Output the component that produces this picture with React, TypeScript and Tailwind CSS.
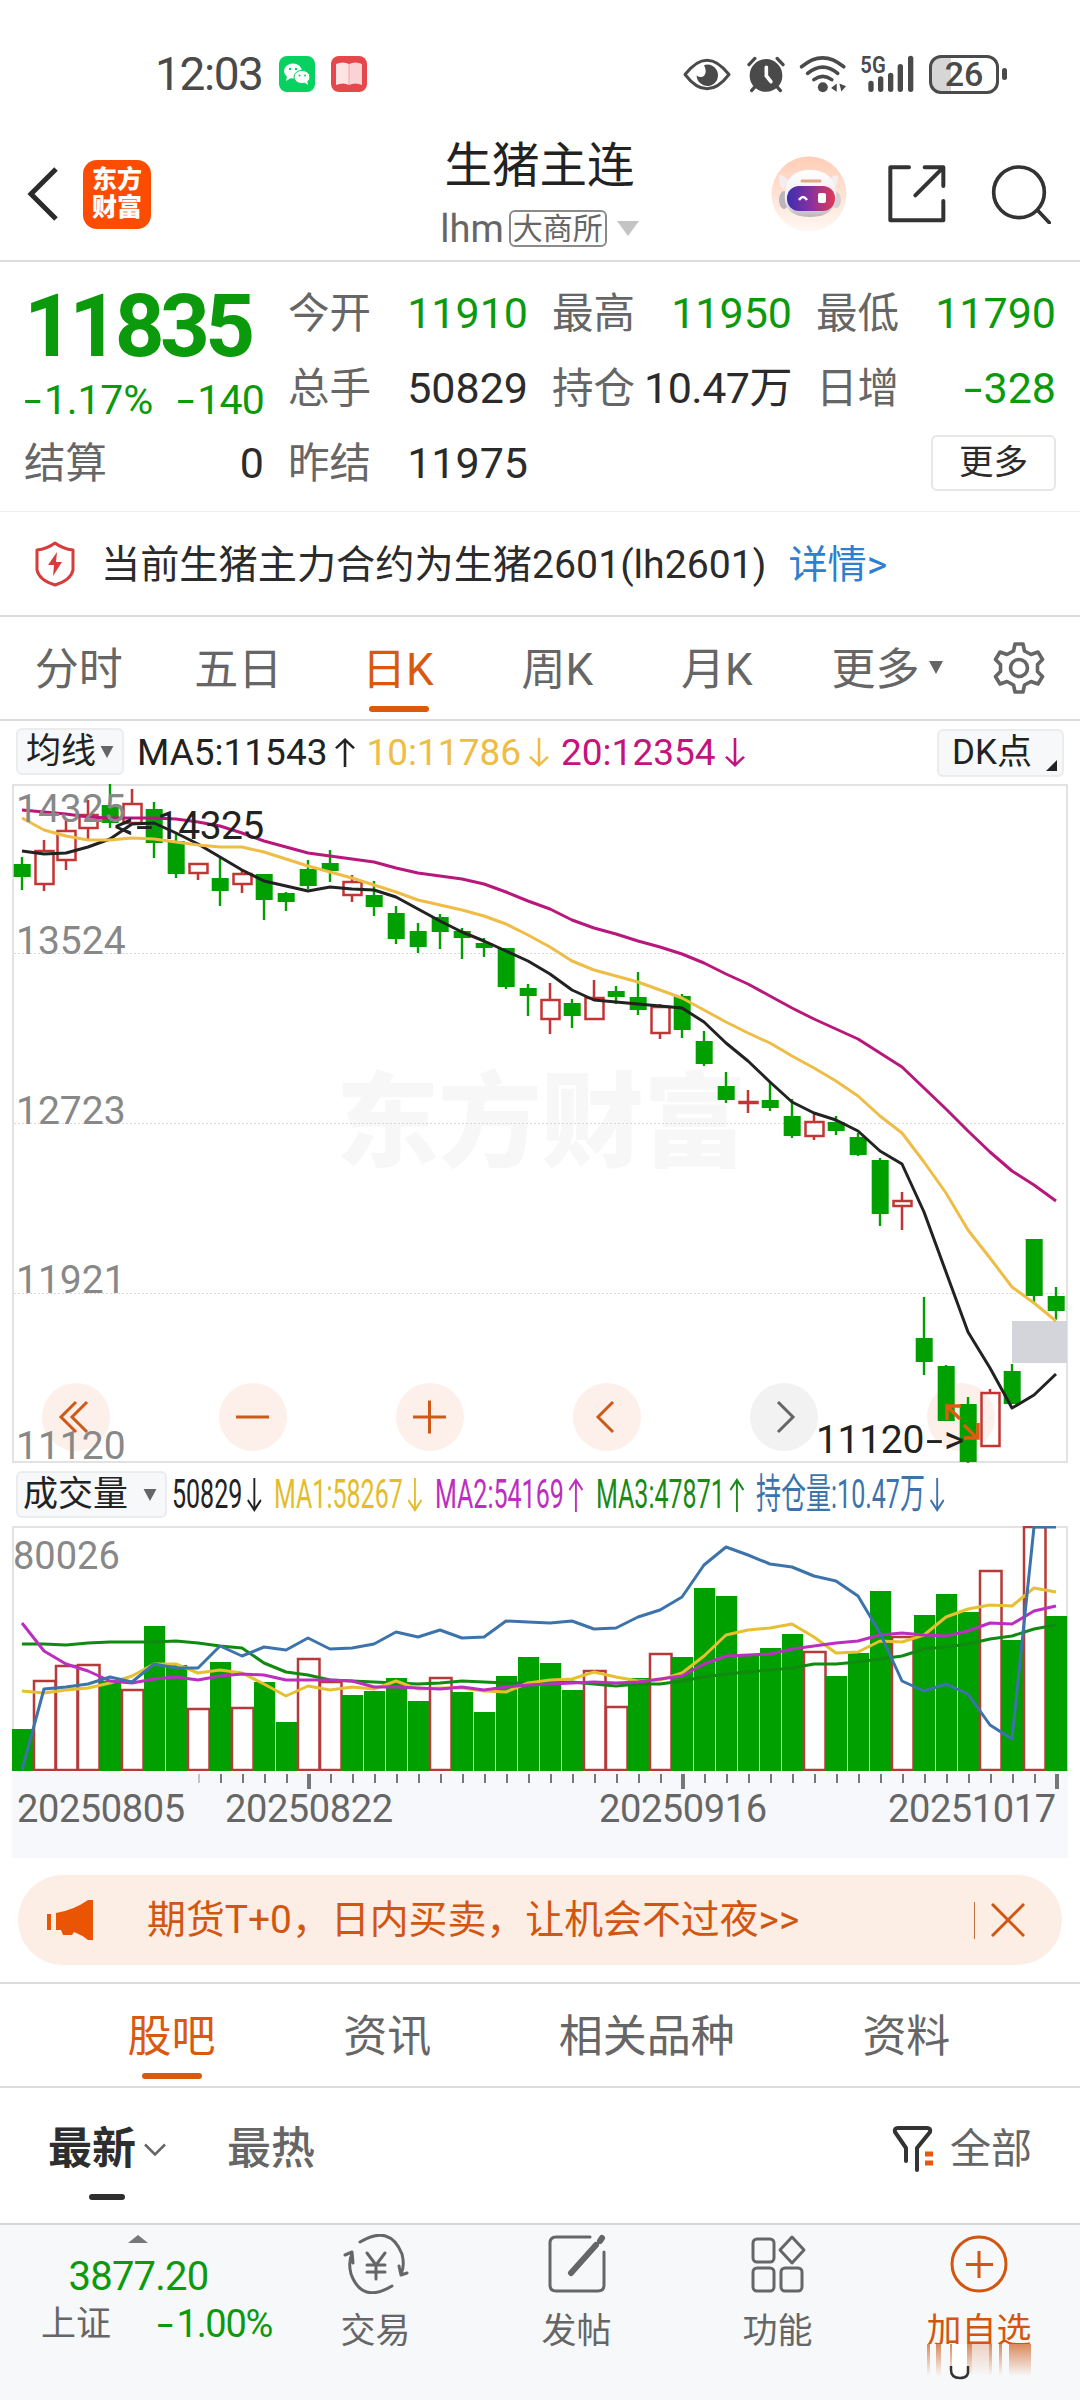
import type { ReactNode } from "react";

type Candle = [up: 0 | 1, high: number, top: number, bottom: number, low: number];

const STEP = 22;
const xAt = (i: number) => 10 + STEP * i;

const candles: Candle[] = [
  [0, 73, 80, 93, 106], [1, 56, 67, 100, 107], [1, 35, 47, 76, 86], [1, 16, 31, 44, 56],
  [0, 0, 21, 39, 44], [1, 5, 20, 39, 39], [0, 18, 25, 59, 74], [0, 50, 57, 90, 94],
  [1, 79, 80, 89, 96], [0, 74, 94, 107, 122], [1, 86, 90, 100, 109], [0, 90, 90, 116, 136],
  [0, 108, 109, 118, 127], [0, 76, 85, 102, 105], [0, 66, 79, 87, 98], [1, 91, 98, 111, 118],
  [0, 97, 111, 123, 132], [0, 122, 129, 155, 160], [0, 139, 147, 163, 169], [0, 130, 133, 148, 165],
  [0, 144, 147, 154, 175], [0, 154, 159, 164, 173], [0, 164, 164, 203, 205], [0, 200, 204, 212, 232],
  [1, 199, 216, 235, 250], [0, 215, 219, 232, 244], [1, 196, 214, 235, 235], [0, 202, 207, 213, 220],
  [0, 188, 213, 226, 231], [1, 220, 223, 249, 255], [0, 210, 212, 246, 254], [0, 247, 257, 280, 282],
  [0, 288, 302, 316, 319], [1, 306, 318, 319, 329], [0, 298, 316, 324, 327], [0, 315, 332, 352, 354],
  [1, 329, 338, 352, 356], [0, 332, 338, 347, 351], [0, 349, 353, 371, 372], [0, 374, 376, 430, 442],
  [1, 408, 417, 422, 446], [0, 513, 554, 578, 591], [0, 581, 582, 637, 637], [0, 613, 620, 678, 679],
  [1, 605, 609, 662, 662], [0, 580, 587, 620, 620], [0, 455, 455, 512, 518], [0, 503, 512, 527, 536],
];

const ma5 = [67, 70, 69, 63, 55, 40, 39, 49, 60, 73, 86, 97, 102, 107, 103, 105, 106, 113, 125, 137, 148, 157, 167, 177, 190, 206, 216, 218, 220, 222, 224, 238, 259, 277, 298, 318, 329, 336, 347, 367, 380, 428, 488, 548, 584, 624, 611, 590];
const ma10 = [34, 46, 52, 56, 56, 54, 55, 58, 61, 63, 63, 68, 75, 82, 88, 94, 101, 108, 116, 121, 126, 132, 140, 151, 163, 177, 186, 192, 198, 206, 214, 226, 238, 249, 259, 272, 284, 297, 312, 332, 349, 378, 409, 446, 474, 503, 519, 537];
const ma20 = [26, 28, 30, 33, 34, 34, 34, 35, 38, 42, 49, 57, 63, 69, 72, 75, 78, 84, 89, 92, 95, 100, 108, 117, 125, 136, 144, 150, 157, 163, 170, 179, 190, 200, 212, 224, 235, 245, 255, 269, 283, 304, 325, 347, 368, 387, 401, 417];

const volumes: [up: 0 | 1, top: number][] = [
  [0, 203], [1, 154], [1, 139], [1, 138], [0, 155], [1, 163], [0, 100], [0, 139], [1, 182], [0, 136],
  [1, 181], [0, 156], [0, 196], [1, 132], [1, 155], [0, 169], [0, 165], [0, 152], [0, 175], [1, 151],
  [0, 166], [0, 186], [0, 150], [0, 131], [0, 137], [0, 164], [1, 144], [1, 180], [0, 152], [1, 127],
  [0, 131], [0, 62], [0, 70], [0, 128], [0, 122], [0, 108], [1, 125], [0, 150], [0, 127], [0, 65],
  [1, 110], [0, 89], [0, 68], [0, 86], [1, 44], [0, 114], [1, 0], [0, 90],
];
const vma1 = [165, 167, 164, 162, 157, 150, 138, 138, 147, 144, 147, 158, 170, 160, 164, 161, 163, 155, 163, 162, 162, 165, 166, 157, 154, 153, 146, 151, 155, 154, 147, 130, 109, 104, 102, 98, 111, 127, 126, 115, 116, 109, 91, 83, 79, 80, 62, 66];
const vma2 = [97, 125, 138, 145, 155, 157, 153, 151, 154, 150, 148, 149, 154, 154, 154, 155, 161, 161, 162, 163, 161, 164, 161, 159, 158, 157, 156, 157, 156, 153, 150, 138, 130, 129, 128, 123, 120, 117, 115, 109, 107, 109, 110, 105, 97, 98, 85, 80];
const vma3 = [118, 118, 119, 117, 116, 116, 116, 115, 117, 120, 122, 137, 146, 149, 154, 155, 156, 157, 158, 157, 155, 156, 157, 157, 157, 156, 158, 160, 158, 158, 155, 151, 148, 146, 144, 142, 138, 138, 136, 133, 130, 123, 121, 118, 113, 110, 103, 99];
const interest = [244, 163, 161, 158, 151, 156, 138, 142, 142, 120, 130, 121, 124, 112, 123, 122, 118, 106, 111, 104, 112, 111, 95, 96, 97, 95, 103, 102, 91, 84, 71, 39, 21, 29, 38, 41, 50, 55, 70, 107, 155, 165, 158, 168, 199, 213, 1, 1];

const toPoints = (ys: number[]) => ys.map((y, i) => `${xAt(i)},${y}`).join(" ");

const Line = ({ ys, color }: { ys: number[]; color: string }) => (
  <polyline points={toPoints(ys)} fill="none" stroke={color} strokeWidth="3" strokeLinejoin="round" />
);

const Arrow = ({ up, className }: { up?: boolean; className?: string }) => (
  <svg viewBox="0 0 20 34" preserveAspectRatio="none" className={className} fill="none" stroke="currentColor" strokeWidth="2.6">
    {up ? <path d="M10 34V2M1 12l9-10 9 10" /> : <path d="M10 0v32M1 22l9 10 9-10" />}
  </svg>
);

const Minus = () => <span className="inline-block w-[20px] origin-left scale-x-[1.55]">-</span>;

const StatusBar = () => (
  <div className="flex h-[148px] items-center pl-[155px] pr-[73px] text-[#4a4a4a]">
    <span className="w-[124px] text-[46px] leading-none tracking-[-1.4px]">12:03</span>
    <svg viewBox="0 0 36 36" className="h-9 w-9">
      <rect width="36" height="36" rx="8" fill="#07d160" />
      <ellipse cx="14" cy="15" rx="9" ry="7.5" fill="#fff" />
      <path d="M8 20l-1 5 5-3z" fill="#fff" />
      <ellipse cx="23" cy="21" rx="8" ry="6.6" fill="#fff" stroke="#07d160" />
      <path d="M25 26l4 3-1-5z" fill="#fff" />
      <g fill="#07d160">
        <circle cx="11" cy="13" r="1.2" />
        <circle cx="17" cy="13" r="1.2" />
        <circle cx="20.500" cy="19.500" r="1" />
        <circle cx="26" cy="19.500" r="1" />
      </g>
    </svg>
    <svg viewBox="0 0 36 36" className="ml-4 h-9 w-9">
      <rect width="36" height="36" rx="8" fill="#e5474b" />
      <path d="M5 8q7-3 13 0v21q-6-3-13 0z" fill="#fde3e4" />
      <path d="M31 8q-7-3-13 0v21q6-3 13 0z" fill="#fbd3d5" />
      <path d="M18 8v21" stroke="#f3a5a8" />
    </svg>
    <div className="ml-auto flex items-center">
      <svg viewBox="40 46 144 104" className="h-[35px] w-[48px]">
        <path d="M46 98q66-86 132 0q-66 86-132 0z" fill="none" stroke="#4a4a4a" strokeWidth="9" strokeLinejoin="round" />
        <path d="M103 70a32 32 0 1 1-22 31q13 9 23 0q9-12-1-31z" fill="#4a4a4a" />
      </svg>
      <svg viewBox="228 44 116 112" className="ml-[16px] h-[37px] w-[38px]">
        <circle cx="286" cy="103" r="50" fill="#4a4a4a" />
        <path d="M287 78v26l14 18" fill="none" stroke="#fff" strokeWidth="11" strokeLinecap="round" />
        <path d="M234 70l18-19M338 70l-18-19M252 138l-10 11M320 138l10 11" stroke="#4a4a4a" strokeWidth="10" strokeLinecap="round" />
      </svg>
      <svg viewBox="386 42 142 114" className="ml-[14px] h-[38px] w-[47px]">
        <g fill="none" stroke="#4a4a4a" strokeWidth="11" strokeLinecap="round">
          <path d="M394 77q63-54 127 0" />
          <path d="M412 97q46-38 91 0" />
          <path d="M431 116q27-20 54 0" />
        </g>
        <circle cx="458" cy="139" r="15" fill="#4a4a4a" />
        <path d="M500 128v25l-17-12zM508 128l20 8-14 16z" fill="#4a4a4a" />
      </svg>
      <svg viewBox="570 42 162 114" className="ml-[14px] h-[38px] w-[54px] overflow-visible">
        <text x="571" y="97" fontSize="70" fontWeight="600" textLength="76" lengthAdjust="spacingAndGlyphs" fill="#4a4a4a">5G</text>
        <path d="M603 127v18M632 114v31M662 103v42M691 77v68M722 52v93" stroke="#4a4a4a" strokeWidth="16" strokeLinecap="round" />
      </svg>
      <div className="relative ml-[15px] flex h-[39px] w-[70px] items-center justify-center overflow-hidden rounded-[12px] border-[3px] border-[#4a4a4a] bg-gradient-to-r from-[#d6d6d6] from-30% to-white to-30%">
        <span className="text-[34px] font-medium leading-none">26</span>
      </div>
      <div className="ml-[3px] h-[12px] w-[5px] rounded-full bg-[#4a4a4a]" />
    </div>
  </div>
);

const Robot = () => (
  <svg viewBox="0 0 76 76" className="h-[76px] w-[76px]">
    <defs>
      <linearGradient id="halo" x2="0" y2="1">
        <stop offset="0" stopColor="#ffcdb5" />
        <stop offset="1" stopColor="#fff8f4" />
      </linearGradient>
      <linearGradient id="visor">
        <stop offset="0" stopColor="#3b2fb0" />
        <stop offset=".5" stopColor="#8c2f9e" />
        <stop offset="1" stopColor="#e03a55" />
      </linearGradient>
      <linearGradient id="shell" x2="0" y2="1">
        <stop offset="0" stopColor="#fff" />
        <stop offset=".7" stopColor="#eeeaf0" />
        <stop offset="1" stopColor="#b9b4ba" />
      </linearGradient>
    </defs>
    <circle cx="38" cy="38" r="37.500" fill="url(#halo)" />
    <ellipse cx="13" cy="44" rx="5" ry="9" fill="#bcb5bb" />
    <ellipse cx="65" cy="44" rx="5" ry="8" fill="#d6d0d6" />
    <path d="M8 19q6 0 9 6l-5 8q-5-6-4-14zM67 19q-6 0-9 6l5 8q5-6 4-14z" fill="#f5eef0" />
    <path d="M14 36q2-22 25-22t26 22q2 25-26 25t-25-25z" fill="url(#shell)" />
    <path d="M31 25h18" stroke="#e0ab83" strokeWidth="3" strokeLinecap="round" />
    <rect x="16" y="30" width="48" height="25" rx="12" fill="url(#visor)" />
    <path d="M28 44q4-6 8 0" fill="none" stroke="#fff" strokeWidth="2.500" />
    <rect x="47" y="37" width="8" height="10" rx="2" fill="#fff" />
  </svg>
);

const NavBar = () => (
  <div className="grid h-[92px] grid-cols-[1fr_auto_1fr] grid-rows-[92px] items-center pl-[27px] pr-[29px]">
    <div className="flex items-center">
      <svg viewBox="0 0 32 54" className="h-[54px] w-[32px]" fill="none" stroke="#2b2b2b" strokeWidth="5">
        <path d="M29 2L4 27l25 25" />
      </svg>
      <div className="ml-[24px] flex h-[69px] w-[68px] flex-col items-center justify-center rounded-[14px] bg-[#fc4c02] text-[25px] font-black leading-[28px] text-white">
        <span>东方</span>
        <span>财富</span>
      </div>
    </div>
    <div className="flex h-[107px] flex-col items-center justify-between pl-[1px]">
      <h1 className="text-[47.500px] leading-[50px] text-[#222]">生猪主连</h1>
      <div className="flex items-center text-[#666]">
        <span className="text-[38px] leading-none">lhm</span>
        <span className="ml-[5px] flex h-[37px] w-[98px] items-center justify-center rounded-[6px] border-2 border-[#8a8a8a] text-[30px] leading-none">
          大商所
        </span>
        <svg viewBox="0 0 22 15" className="ml-[10px] h-[15px] w-[22px]" fill="#c4c4c4">
          <path d="M0 0h22L11 15z" />
        </svg>
      </div>
    </div>
    <div className="flex items-center justify-end">
      <Robot />
      <svg viewBox="650 374 180 180" className="ml-[40px] h-[60px] w-[60px]" fill="none" stroke="#333" strokeWidth="12" strokeLinecap="round" strokeLinejoin="round">
        <path d="M716 384h-56v159h159v-58M763 384h56v56M819 384l-84 84" />
      </svg>
      <svg viewBox="962 370 180 180" className="ml-[44px] h-[60px] w-[60px]" fill="none" stroke="#333" strokeWidth="11" strokeLinecap="round">
        <circle cx="1046" cy="455" r="76" />
        <path d="M1101 508l36 38" />
      </svg>
    </div>
  </div>
);

const Quote = ({ label, children, green }: { label: string; children: ReactNode; green?: boolean }) => (
  <div className="flex items-center justify-between whitespace-nowrap">
    <span className="text-[41.500px]">
      <span className="text-[#666]">{label}</span>
    </span>
    <span className={green ? "text-[43px] text-[#0b9a0b]" : "text-[43px] text-[#2b2b2b]"}>{children}</span>
  </div>
);

const QuotePanel = () => (
  <section className="flex h-[250px] border-b border-[#ececec] pl-[24px] leading-none">
    <div className="flex w-[240px] flex-col">
      <div className="mt-[28px] text-[87px] font-bold leading-[72px] tracking-[-4.600px] text-[#0b9a0b]">11835</div>
      <div className="mt-[20px] flex justify-between text-[41px] leading-[36px] text-[#0b9a0b]">
        <span className="tracking-[-0.200px]"><Minus />1.17%</span>
        <span className="tracking-[-0.800px]"><Minus />140</span>
      </div>
      <div className="mt-[24px]">
        <Quote label="结算">0</Quote>
      </div>
    </div>
    <div className="ml-[24px] grid h-[239px] grid-cols-[240px_240px_240px] grid-rows-[75px_75px_75px] gap-x-[24px] pt-[14px]">
      <Quote label="今开" green>11910</Quote>
      <Quote label="最高" green>11950</Quote>
      <Quote label="最低" green>11790</Quote>
      <Quote label="总手">50829</Quote>
      <Quote label="持仓"><span className="tracking-[-0.500px]">10.47万</span></Quote>
      <Quote label="日增" green><Minus />328</Quote>
      <Quote label="昨结">11975</Quote>
      <div />
      <button className="mt-[-2px] h-[56px] w-[125px] self-center justify-self-end rounded-[6px] border-2 border-[#e6e6e6] text-[34.500px] leading-none text-[#2b2b2b]">
        更多
      </button>
    </div>
  </section>
);

const Notice = () => (
  <section className="flex h-[105px] items-center border-b-2 border-[#dcdcdc] pl-[35px] text-[39.200px] leading-none text-[#2b2b2b]">
    <svg viewBox="0 0 40 46" className="h-[46px] w-[40px]" fill="none" stroke="#d63c3c" strokeWidth="3" strokeLinejoin="round">
      <path d="M20 2q8 6 18 7v20q-2 10-18 15Q4 39 2 29V9q10-1 18-7z" />
      <path d="M22 11l-9 13h6l-1 11 9-14h-6z" fill="#d63c3c" stroke="none" />
    </svg>
    <span className="ml-[26px] pt-[4px]">当前生猪主力合约为生猪2601(lh2601)</span>
    <span className="ml-[22px] pt-[4px] text-[#2f7fd0]">详情&gt;</span>
  </section>
);

const periods = ["分时", "五日", "日K", "周K", "月K"];

const PeriodTabs = () => (
  <nav className="flex h-[104px] border-b-2 border-[#dcdcdc] text-[44px] leading-none text-[#666]">
    {periods.map((name) => (
      <div key={name} className="relative flex w-[159.500px] items-center justify-center">
        <span className={name === "日K" ? "pr-[2px] pt-[3px] text-[#d9590f]" : "pr-[2px] pt-[3px]"}>{name}</span>
        {name === "日K" && <i className="absolute bottom-[7px] h-[6px] w-[60px] rounded-full bg-[#d9590f]" />}
      </div>
    ))}
    <div className="ml-[34px] flex items-center pt-[3px]">
      更多
      <svg viewBox="0 0 14 13" className="mt-[-4px] ml-[9px] h-[13px] w-[14px]" fill="#666">
        <path d="M0 0h14L7 13z" />
      </svg>
    </div>
    <svg viewBox="0 0 52 52" className="ml-auto mr-[35px] self-center h-[54px] w-[52px]" fill="none" stroke="#666" strokeWidth="3.600" strokeLinejoin="round">
      <path d="M22 2h8l1.500 7 6.500 3.500 7-2.500 4.500 7.500-5 5v7l5 5L45 42l-7-2.500L31.500 43 30 50h-8l-1.500-7-6.500-3.500L7 42l-4.500-7.500 5-5v-7l-5-5L7 10l7 2.500L20.500 9z" />
      <circle cx="26" cy="26" r="8.500" />
    </svg>
  </nav>
);

const MaRow = () => (
  <div className="flex h-[63px] items-center pl-[16px] pr-[16px] text-[37px] leading-none">
    <div className="mt-[-2px] flex h-[47px] w-[108px] items-center rounded-[6px] border-2 border-[#ebecee] bg-[#f6f8fa] pl-[8px] text-[35px] text-[#222]">
      均线
      <svg viewBox="0 0 14 13" className="ml-[4px] h-[12px] w-[14px]" fill="#666">
        <path d="M0 0h14L7 13z" />
      </svg>
    </div>
    <span className="ml-[13px] text-[#222]">MA5:11543</span>
    <Arrow up className="ml-[7px] h-[29px] w-[20px] text-[#222]" />
    <span className="ml-[12px] text-[#efbd45]">10:11786</span>
    <Arrow className="ml-[8px] h-[29px] w-[20px] text-[#efbd45]" />
    <span className="ml-[12px] text-[#c4137d]">20:12354</span>
    <Arrow className="ml-[9px] h-[29px] w-[20px] text-[#c4137d]" />
    <div className="relative ml-auto flex h-[48px] w-[127px] items-center rounded-[6px] border-2 border-[#ebecee] bg-[#f6f8fa] pl-[13px] text-[35px] text-[#222]">
      DK点
      <svg viewBox="0 0 11 11" className="absolute bottom-[4px] right-[5px] h-[11px] w-[11px]" fill="#222">
        <path d="M11 0v11H0z" />
      </svg>
    </div>
  </div>
);

const CandleShape = ({ c, i }: { c: Candle; i: number }) => {
  const [up, high, top, bottom, low] = c;
  const x = xAt(i);
  if (up) {
    return (
      <g stroke="#c23535" strokeWidth="2.500" fill="none">
        <path d={`M${x} ${high}V${top}M${x} ${bottom}V${low}`} />
        <rect x={x - 8.5} y={top} width="18" height={bottom - top} />
      </g>
    );
  }
  return (
    <g fill="#00a000">
      <rect x={x - 1.2} y={high} width="2.400" height={low - high} />
      <rect x={x - 8.3} y={top} width="17" height={bottom - top} />
    </g>
  );
};

const tools = [
  "M34 19L19 34l15 15M45 19L30 34l15 15",
  "M17 34h33",
  "M17 34h33M33.500 17.500v33",
  "M40 19L25 34l15 15",
  "M28 19l15 15-15 15",
];

const PriceChart = () => (
  <div className="relative mx-[12px] h-[679px] border-2 border-[#e2e2e2]">
    <div className="absolute left-[322px] top-[286px] text-[103px] font-black leading-none tracking-[-0.500px] text-[#f7f7f7]">东方财富</div>
    <div className="absolute left-[28px] top-[597px] flex gap-[109px]">
      {tools.map((d, i) => (
        <svg key={i} viewBox="0 0 68 68" className="h-[68px] w-[68px]" fill="none" strokeWidth="3" stroke={i === 4 ? "#666" : "#cf5a17"}>
          <circle cx="34" cy="34" r="34" fill={i === 4 ? "#f2f2f2" : "#fdf0ea"} stroke="none" />
          <path d={d} />
        </svg>
      ))}
      <svg viewBox="0 0 68 68" className="h-[68px] w-[68px]">
        <circle cx="34" cy="34" r="34" fill="#fdf0ea" />
      </svg>
    </div>
    <svg viewBox="0 0 1056 679" className="absolute -left-[2px] -top-[2px] h-[679px] w-[1056px]">
      <path d="M2 169.500h1052M2 339.500h1052M2 509.500h1052" stroke="#d9d9d9" strokeDasharray="2 2" />
      {candles.map((c, i) => (
        <CandleShape key={i} c={c} i={i} />
      ))}
      <rect x="1000" y="537" width="55" height="42" fill="#d3d5da" />
      <Line ys={ma5} color="#222" />
      <Line ys={ma10} color="#efbd45" />
      <Line ys={ma20} color="#b8187c" />
      <g fontSize="39" fill="#888">
        <text x="4" y="38">14325</text>
        <text x="4" y="170">13524</text>
        <text x="4" y="340">12723</text>
        <text x="4" y="509">11921</text>
        <text x="4" y="675">11120</text>
      </g>
      <g fontSize="39" fill="#222">
        <text x="102" y="55">&lt;</text>
        <text x="124" y="55" textLength="17" lengthAdjust="spacingAndGlyphs">-</text>
        <text x="145" y="55" letterSpacing="-.6">14325</text>
        <text x="804" y="669" letterSpacing="-.3">11120</text>
        <text x="914" y="669" textLength="17" lengthAdjust="spacingAndGlyphs">-</text>
        <text x="932" y="669">&gt;</text>
      </g>
      <path d="M935 636v-14h14M935 622l13 13M952 641l13 13M966 639v15h-14" fill="none" stroke="#e2590f" strokeWidth="3.500" />
    </svg>
  </div>
);

const legend = [
  { text: "50829", up: false, color: "text-[#222]" },
  { text: "MA1:58267", up: false, color: "text-[#e3bd2c]" },
  { text: "MA2:54169", up: true, color: "text-[#bb2fc0]" },
  { text: "MA3:47871", up: true, color: "text-[#188a18]" },
  { text: "持仓量:10.47万", up: false, color: "text-[#3d73ab]" },
];

const VolumeLegend = () => (
  <div className="flex h-[63px] items-center pl-[16px]">
    <div className="flex h-[47px] w-[151px] items-center rounded-[6px] border-2 border-[#ebecee] bg-[#f6f8fa] pl-[5px] text-[35px] leading-none text-[#222]">
      成交量
      <svg viewBox="0 0 14 13" className="ml-[15px] h-[12px] w-[14px]" fill="#666">
        <path d="M0 0h14L7 13z" />
      </svg>
    </div>
    <div className="ml-[5px] grid grid-cols-[102px_161px_161px_160px_200px] text-[41px] leading-none">
      {legend.map(({ text, up, color }) => (
        <div key={text} className={color}>
          <div className="flex w-max origin-left scale-x-[0.610] items-center gap-[8px] whitespace-nowrap">
            {text}
            <Arrow up={up} className="h-[34px] w-[24px]" />
          </div>
        </div>
      ))}
    </div>
  </div>
);

const VolumeChart = () => (
  <div className="mx-[12px]">
    <svg viewBox="0 0 1056 245" className="block h-[245px] w-[1056px]">
      <path d="M1 245V1h1054v244" fill="none" stroke="#e2e2e2" strokeWidth="2" />
      {volumes.map(([up, top], i) =>
        up ? (
          <rect key={i} x={xAt(i) - 10} y={top + 1} width="21.500" height={243 - top} fill="#fff" stroke="#b53a3a" strokeWidth="2.500" />
        ) : (
          <rect key={i} x={xAt(i) - 10} y={top} width="21.200" height={245 - top} fill="#00a000" />
        )
      )}
      <Line ys={vma3} color="#118a11" />
      <Line ys={vma1} color="#e6c02e" />
      <Line ys={vma2} color="#bb2fc0" />
      <Line ys={interest} color="#3d73ab" />
      <text x="1" y="43" fontSize="38" fill="#888">80026</text>
    </svg>
    <svg viewBox="0 0 1056 87" className="block h-[87px] w-[1056px] bg-[#f7f8fb]">
      {volumes.map((_, i) => {
        const major = i === 13 || i === 30 || i === 47;
        if (i < 8) return null;
        return (
          <path key={i} d={`M${xAt(i) + 1} 3v${major ? 15 : 9}`} stroke="#777" strokeWidth={major ? 4 : 2} opacity={i === 8 ? 0.4 : 1} />
        );
      })}
      <g fontSize="38" fill="#666" letterSpacing="-.4">
        <text x="5" y="51">20250805</text>
        <text x="213" y="51">20250822</text>
        <text x="587" y="51">20250916</text>
        <text x="876" y="51">20251017</text>
      </g>
    </svg>
  </div>
);

const Banner = () => (
  <div className="mx-[18px] mt-[17px] flex h-[90px] items-center rounded-full bg-[#fcede5] pl-[29px] pr-[37px] text-[38.900px] leading-none text-[#d2560f]">
    <svg viewBox="0 0 47 40" className="h-[40px] w-[47px]" fill="#ea5504">
      <path d="M0 14h4v16H0zM9 13q18-3 32-13h5v40h-5q-6-5-14-8l-2 3h-9l-2-5H9z" />
    </svg>
    <span className="ml-[53px]">期货T+0，日内买卖，让机会不过夜&gt;&gt;</span>
    <i className="ml-auto h-[37px] w-[1.500px] bg-[#b9713f]" />
    <svg viewBox="0 0 34 34" className="ml-[16px] h-[34px] w-[34px]" stroke="#d2560f" strokeWidth="3">
      <path d="M1 1l32 32M33 1L1 33" />
    </svg>
  </div>
);

const sections = ["股吧", "资讯", "相关品种", "资料"];

const SectionTabs = () => (
  <nav className="mt-[17px] flex h-[106px] items-center justify-evenly border-y-2 border-[#dcdcdc] pr-[2px] text-[44px] leading-none text-[#666]">
    {sections.map((name, i) => (
      <div key={name} className="relative flex h-full items-center justify-center">
        <span className={i === 0 ? "pt-[3px] text-[#d9590f]" : "pt-[3px]"}>{name}</span>
        {i === 0 && <i className="absolute bottom-[7px] h-[6px] w-[60px] rounded-full bg-[#d9590f]" />}
      </div>
    ))}
  </nav>
);

const SortRow = () => (
  <div className="flex h-[137px] border-b-2 border-[#d4d7db] pl-[48px] pr-[48px] pt-[38px] text-[44px] leading-[46px] text-[#666]">
    <div className="flex flex-col items-center">
      <div className="flex items-center">
        <span className="font-bold text-[#2e2e2e]">最新</span>
        <svg viewBox="0 0 22 12" className="ml-[8px] h-[13px] w-[22px]" fill="none" stroke="#666" strokeWidth="2.500">
          <path d="M1 1l10 10L21 1" />
        </svg>
      </div>
      <i className="mt-[22px] h-[6px] w-[36px] rounded-full bg-[#2e2e2e]" />
    </div>
    <span className="ml-[61px] font-medium">最热</span>
    <div className="ml-auto flex h-[46px] items-center text-[41px]">
      <svg viewBox="0 0 44 46" className="mr-[14px] h-[46px] w-[44px]" fill="none" stroke="#333" strokeWidth="4" strokeLinecap="round" strokeLinejoin="round">
        <path d="M14 35V22L3 6q-1-4 3-4h29q4 0 3 4L25 22v22" />
        <path d="M33 28h8M33 37h8" stroke="#e2590f" strokeWidth="5" strokeLinecap="butt" />
      </svg>
      全部
    </div>
  </div>
);

const NavItem = ({ label, children }: { label: string; children: ReactNode }) => (
  <div className="flex w-[201px] flex-col items-center pt-[9px] text-[35px] leading-none text-[#666]">
    <svg viewBox="0 0 66 60" className="h-[60px] w-[66px]" fill="none" stroke="#666" strokeWidth="3" strokeLinecap="round" strokeLinejoin="round">
      {children}
    </svg>
    <span className="mt-[20px]">{label}</span>
  </div>
);

const BottomBar = () => (
  <footer className="flex h-[177px] bg-[#f7f8fa]">
    <div className="flex w-[275px] flex-col items-center text-[#0b9a0b] leading-none">
      <svg viewBox="0 0 20 8" className="mt-[10px] h-[8px] w-[20px]" fill="#777">
        <path d="M10 0l10 8H0z" />
      </svg>
      <div className="mt-[14px] pl-[2px] text-[40px] tracking-[-0.800px]">3877.20</div>
      <div className="mt-[8px] flex w-full items-center justify-between pl-[41px] pr-[3px] text-[38px]">
        <span className="text-[35px] text-[#666]">上证</span>
        <span className="tracking-[-1.300px]"><Minus />1.00%</span>
      </div>
    </div>
    <NavItem label="交易">
      <path d="M17 8q30-18 42 12q3 12-1 20M49 52q-30 18-41-12q-3-12 1-20M2 21l7-3 1 11M64 39l-6 2-2-9" />
      <path d="M24 19l9 12 9-12M33 31v14M24 31h18M24 38h18" />
    </NavItem>
    <NavItem label="发帖">
      <path d="M46 3H12q-6 0-6 6v42q0 6 6 6h42q6 0 6-6V18" />
      <path d="M27 39L52 11M56 7l2-3" strokeWidth="6" />
    </NavItem>
    <NavItem label="功能">
      <rect x="8" y="5" width="21" height="23" rx="4" />
      <rect x="8" y="34" width="21" height="23" rx="4" />
      <rect x="36" y="34" width="21" height="23" rx="4" />
      <path d="M47 3l12 13-12 13-12-13z" />
    </NavItem>
    <div className="relative flex w-[202px] flex-col items-center pt-[9px] text-[35px] leading-none text-[#d2560f]">
      <svg viewBox="0 0 60 60" className="h-[60px] w-[60px]" fill="none" stroke="currentColor" strokeWidth="3">
        <circle cx="30" cy="30" r="27" />
        <path d="M30 17v27M17 30.500h27" />
      </svg>
      <span className="mt-[20px]">加自选</span>
      {/* faded drip below the label */}
      <svg viewBox="0 0 108 36" className="absolute left-[47px] top-[119px] h-[36px] w-[108px]">
        <defs>
          <linearGradient id="drip" x2="0" y2="1">
            <stop offset="0" stopColor="#d98a5c" />
            <stop offset="1" stopColor="#f7f8fa" />
          </linearGradient>
        </defs>
        <rect width="108" height="36" fill="#f7f8fa" />
        <g fill="url(#drip)">
          <path d="M2 0h3v32H2zM11 0h5v32h-5zM44 0h3v32h-3zM64 0h3v32h-3zM74 0h3v32h-3zM84 0h22v32H84z" />
          <path d="M47 0h17v32H47z" opacity=".35" />
        </g>
        <path d="M26 0v28q0 6 9 6t8-6V0" fill="#fff" stroke="url(#drip)" strokeWidth="2" />
        <path d="M26 22v4q0 8 9 8t8-8v-4" fill="none" stroke="#333" strokeWidth="2.500" />
      </svg>
    </div>
  </footer>
);

const App = () => {
  return (
    <div className="h-[2400px] w-[1080px] overflow-hidden bg-white font-['Roboto','Noto_Sans_CJK_SC',sans-serif]">
      <header className="h-[262px] border-b-2 border-[#dcdcdc]">
        <StatusBar />
        <NavBar />
      </header>
      <QuotePanel />
      <Notice />
      <PeriodTabs />
      <MaRow />
      <PriceChart />
      <VolumeLegend />
      <VolumeChart />
      <Banner />
      <SectionTabs />
      <SortRow />
      <BottomBar />
    </div>
  );
};

export default App;
